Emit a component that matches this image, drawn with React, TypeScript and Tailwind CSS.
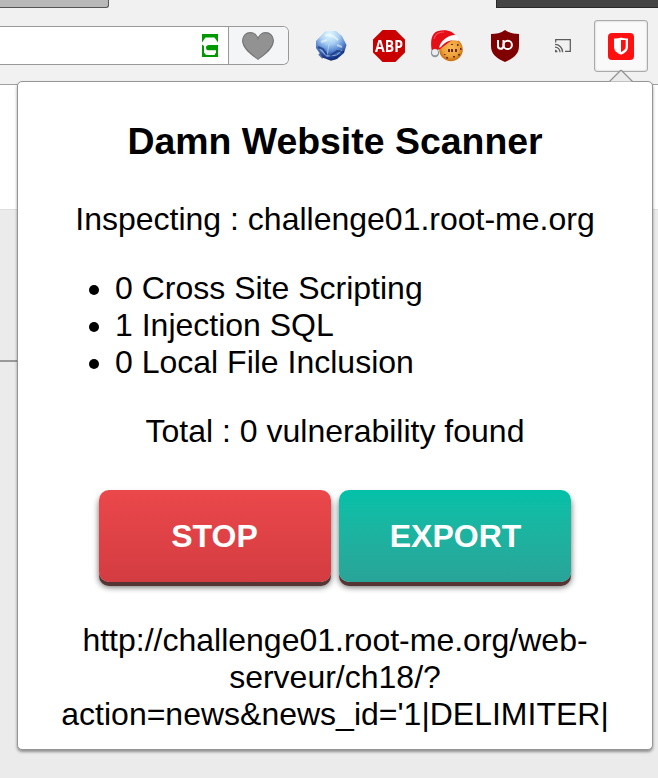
import React from "react";

function GreenGlyph() {
  return (
    <svg width="16" height="23" viewBox="0 0 16 23" className="mr-[10px] shrink-0">
      <path d="M0 0h16v23H0z" fill="#009a00" />
      <path d="M3.500 3.500h9L16 8.500v2.500H7c-2 0-3 1-3 2.700s1 2.600 3 2.600h7v2.200L12.500 21H4L2 18.500V12L0 10.500V8.500z" fill="#fff" />
    </svg>
  );
}

function Heart() {
  return (
    <svg width="32" height="28" viewBox="0 0 32 28" className="-ml-[2px]">
      <path
        d="M16 27.3C11 23.5 0.6 17 0.6 8.6C0.6 4 4 0.6 8.3 0.6C12.5 0.6 15.5 3.5 16 7.5C16.5 3.5 19.5 0.6 23.7 0.6C28 0.6 31.4 4 31.4 8.6C31.4 17 21 23.5 16 27.3Z"
        fill="#929292"
        stroke="#777"
        strokeWidth="1.1"
      />
    </svg>
  );
}

function Globe() {
  return (
    <svg width="32" height="32" viewBox="0 0 32 32">
      <defs>
        <radialGradient id="orb" cx=".45" cy=".12" r=".9">
          <stop offset="0" stopColor="#e2faff" />
          <stop offset=".35" stopColor="#a9d0f2" />
          <stop offset=".6" stopColor="#5d8bd2" />
          <stop offset=".85" stopColor="#1d3f97" />
          <stop offset="1" stopColor="#102366" />
        </radialGradient>
        <filter id="soft"><feGaussianBlur stdDeviation=".7" /></filter>
      </defs>
      <path d="M10 1.5 21 1l6 5 4.5 9-2.500 8-7 6-6 1.700-8-3L1 18V11z" fill="url(#orb)" filter="url(#soft)" />
      <g filter="url(#soft)" fill="none">
        <path d="m5 19 7 7 10-1 5-5M12 26l2-12" stroke="#c4e2fa" strokeWidth="1.2" opacity=".6" />
        <path d="m3 17 5 2 4 6m3 1 7-5 7 1m-5 3-5 4m-11-1-4-4" stroke="#102d73" strokeWidth="2" opacity=".65" />
        <path d="m10 5 8 1 5 4m-17 2 6-2m10 5 5 2" stroke="#fff" strokeWidth="2" opacity=".5" />
      </g>
    </svg>
  );
}

function AdBlock() {
  return (
    <div className="flex h-8 w-8 items-center justify-center bg-[#ca0000] [clip-path:polygon(30%_0,70%_0,100%_30%,100%_70%,70%_100%,30%_100%,0_70%,0_30%)]">
      <span className="scale-y-115 font-['Open_Sans',sans-serif] text-[14px] leading-5 font-bold text-white">ABP</span>
    </div>
  );
}

function Cookie() {
  return (
    <svg width="32" height="32" viewBox="0 0 32 32">
      <defs>
        <radialGradient id="biscuit" cx=".5" cy=".45">
          <stop offset="0" stopColor="#fbb958" />
          <stop offset=".7" stopColor="#eda23c" />
          <stop offset="1" stopColor="#cf7518" />
        </radialGradient>
        <filter id="cookieSoft"><feGaussianBlur stdDeviation=".5" /></filter>
      </defs>
      <g filter="url(#cookieSoft)">
        <circle cx="20" cy="19.500" r="11.8" fill="url(#biscuit)" />
        <path d="M1 22C-1 12 0 3 7 1c8-2 16 0 18 6L9 19z" fill="#e50914" />
        <path d="M3 9C4 4 8 2 13 2" stroke="#ff4b55" strokeWidth="1.2" fill="none" />
        <path d="M8 18C9 11 17 5 24 5c4 1 4 5 3 6-7-2-13 1-17 6z" fill="#fbfbfb" />
        <circle cx="4" cy="23" r="4.200" fill="#8f989f" />
        <circle cx="4" cy="22.200" r="3" fill="#eceff2" />
        <g fill="#6e2c08">
          <path d="M17 19h2v3h-2zM20 19h2v3h-2zM24 19h2v3h-2z" />
          <path d="M15 27h2v1.500h-2zM22 26h2v1.500h-2zM29 18h1.500v2H29zM26 14h1.500v2H26zM20 14h2v1h-2zM13 24h1.500v1H13zM27 24h2v1.500h-2z" />
        </g>
      </g>
    </svg>
  );
}

function UShield() {
  return (
    <svg width="28" height="32" viewBox="0 0 28 32">
      <path d="M14 0C10 3 5 4 0 4v12c0 8 5 12 14 16 9-4 14-8 14-16V4C23 4 18 3 14 0z" fill="#800000" />
      <path d="M7 10v6c0 3.700 5 3.700 5.500 0V10" stroke="#fff" strokeWidth="2" fill="none" />
      <circle cx="16.700" cy="14.900" r="4.200" stroke="#fff" strokeWidth="2" fill="none" />
    </svg>
  );
}

function Cast() {
  return (
    <svg width="16" height="14" viewBox="0 0 16 14" fill="none" stroke="#5c5c5c" strokeWidth="1.25">
      <path d="M.7 3.4V.7h14.6v11.600H10M0 5.400a7.600 7.600 0 0 1 7.600 7.800M0 8.100a5 5 0 0 1 5 5.100" />
      <path d="M0 10.700v2.500h2.500A2.500 2.500 0 0 0 0 10.700z" fill="#5c5c5c" stroke="none" />
    </svg>
  );
}

function ScannerIcon() {
  return (
    <svg width="26" height="27" viewBox="0 0 26 27">
      <rect width="26" height="27" rx="4" fill="#ff1010" />
      <path d="M6 5.500c3 0 5-.1 7.200-1 2.200.9 4 1 6.800 1v8c0 4.500-3 6.500-6.900 8.300C9 20 6 18 6 13.500z" fill="#fff" />
      <path d="M13 7h4.700v6.500c0 2.800-2 4.200-4.700 5.600z" fill="#ff1010" />
    </svg>
  );
}

function Toolbar() {
  return (
    <header className="h-[85px] border-b border-[#a0a0a0] bg-[#f1f1f1]">
      <div className="flex h-2 justify-between">
        <div className="w-[109px] rounded-br-[3px] border-r border-b border-[#555] bg-[#b8b8b8]" />
        <div className="w-[162px] border-b border-l border-[#292929] bg-[#444]" />
      </div>
      <div className="flex pt-3">
        <div className="mt-[6px] flex h-[39px] w-[289px] items-center justify-end overflow-hidden rounded-r-[6px] border-y border-r border-[#999] bg-white">
          <GreenGlyph />
          <div className="flex h-full w-[60px] items-center justify-center border-l border-[#999] bg-[#f4f5f7]">
            <Heart />
          </div>
        </div>
        <div className="mt-[10px] ml-[26px] flex h-8 items-center">
          <Globe />
          <div className="ml-[26px]"><AdBlock /></div>
          <div className="ml-[26px]"><Cookie /></div>
          <div className="ml-7"><UShield /></div>
          <div className="ml-9"><Cast /></div>
        </div>
        <div className="ml-[23px] flex h-[52px] w-[54px] items-center justify-center rounded-[3px] border border-[#aaa] bg-[#f9f9f9] shadow-[inset_0_0_2px_#bbb]">
          <ScannerIcon />
        </div>
      </div>
    </header>
  );
}

const buttonBase =
  "h-[92px] w-[232px] rounded-[10px] text-[32px] font-bold text-white shadow-[0_4px_0_#553534,0_5px_6px_rgba(0,0,0,0.6)]";

function Popup() {
  return (
    <main className="absolute top-[81px] left-[17px] h-[669px] w-[636px] rounded-[5px] border border-[#969696] bg-white px-[17px] text-[32px] leading-[37px] text-black shadow-[0_2px_3px_rgba(0,0,0,0.4)]">
      <svg width="24" height="13" viewBox="0 0 24 13" className="absolute -top-[13px] left-[591px]">
        <path d="M.5 12.500 11 2q1-1 2 0l10.500 10.500" fill="#ebebeb" stroke="#909090" strokeWidth="1.2" />
      </svg>
      <h3 className="mt-[38px] text-center text-[37.44px] leading-[43px] font-bold">Damn Website Scanner</h3>
      <p className="mt-[38px] text-center">Inspecting : challenge01.root-me.org</p>
      <ul className="mt-8 list-disc pl-20">
        <li>0 Cross Site Scripting</li>
        <li>1 Injection SQL</li>
        <li>0 Local File Inclusion</li>
      </ul>
      <p className="mt-8 text-center">Total : 0 vulnerability found</p>
      <div className="mt-10 flex justify-center gap-2">
        <button className={`${buttonBase} bg-linear-to-b from-[#eb484b] to-[#d33c41] pr-[1px]`}>STOP</button>
        <button className={`${buttonBase} bg-linear-to-b from-[#02c1a8] to-[#28a498] pl-[1px]`}>EXPORT</button>
      </div>
      <p className="mt-10 text-center">
        http://challenge01.root-me.org/web-<br />serveur/ch18/?<br />action=news&amp;news_id='1|DELIMITER|
      </p>
    </main>
  );
}

export default function App() {
  return (
    <div className="relative h-[778px] w-[658px] overflow-hidden bg-[#ebebeb] font-['Liberation_Sans',Arial,sans-serif]">
      <Toolbar />
      <div className="h-[125px] border-b border-[#dedede] bg-white" />
      <div className="h-[152px] w-[18px] border-b-2 border-[#999]" />
      <Popup />
    </div>
  );
}
